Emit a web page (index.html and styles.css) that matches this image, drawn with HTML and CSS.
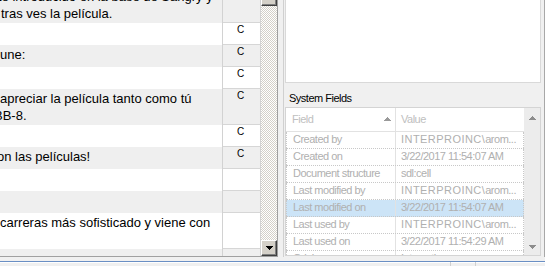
FILE: index.html
```html
<!DOCTYPE html>
<html lang="es">
<head>
  <meta charset="UTF-8" />
  <title>Editor</title>
  <link rel="stylesheet" href="styles.css">
</head>
<body>
  <div class="workspace">
    <!-- Segment grid (scrolled) -->
    <section class="segments">
      <div class="seg-rows">
        <div class="seg-row alt tall first">
          <div class="seg-text">
            <div class="ln shift-2">te introducido en la base de Sangry y</div>
            <div class="ln shift-p1">tras ves la película.</div>
          </div>
          <div class="seg-flag"></div>
        </div>
        <div class="seg-row">
          <div class="seg-text"></div>
          <div class="seg-flag">C</div>
        </div>
        <div class="seg-row alt">
          <div class="seg-text"><div class="ln">une:</div></div>
          <div class="seg-flag">C</div>
        </div>
        <div class="seg-row">
          <div class="seg-text"></div>
          <div class="seg-flag">C</div>
        </div>
        <div class="seg-row alt tall">
          <div class="seg-text">
            <div class="ln">apreciar la película tanto como tú</div>
            <div class="ln shift-6">BB-8.</div>
          </div>
          <div class="seg-flag">C</div>
        </div>
        <div class="seg-row">
          <div class="seg-text"></div>
          <div class="seg-flag">C</div>
        </div>
        <div class="seg-row alt">
          <div class="seg-text"><div class="ln shift-3">on las películas!</div></div>
          <div class="seg-flag">C</div>
        </div>
        <div class="seg-row">
          <div class="seg-text"></div>
          <div class="seg-flag"></div>
        </div>
        <div class="seg-row alt">
          <div class="seg-text"></div>
          <div class="seg-flag"></div>
        </div>
        <div class="seg-row tall">
          <div class="seg-text">
            <div class="ln">carreras más sofisticado y viene con</div>
            <div class="ln"></div>
          </div>
          <div class="seg-flag"></div>
        </div>
        <div class="seg-row alt">
          <div class="seg-text"></div>
          <div class="seg-flag"></div>
        </div>
      </div>
      <div class="vscroll">
        <div class="thumb"></div>
        <div class="scroll-btn">
          <svg width="7" height="4" viewBox="0 0 7 4" shape-rendering="crispEdges"><path d="M0 0h7v1H0zM1 1h5v1H1zM2 2h3v1H2zM3 3h1v1H3z" fill="#000"/></svg>
        </div>
      </div>
    </section>

    <!-- Properties side panel -->
    <aside class="props">
      <div class="notes"></div>
      <div class="props-label">System Fields</div>
      <div class="sf-grid">
        <div class="sf-table">
          <div class="sf-head">
            <div class="sf-hcell sf-field">
              <span>Field</span>
              <svg width="7" height="4" viewBox="0 0 7 4" shape-rendering="crispEdges"><path d="M3 0h1v1H3zM2 1h3v1H2zM1 2h5v1H1zM0 3h7v1H0z" fill="#9a9a9a"/></svg>
            </div>
            <div class="sf-hcell sf-value">Value</div>
          </div>
          <div class="sf-row">
            <div class="sf-cell">Created by</div>
            <div class="sf-cell sf-val"><span class="user">INTERPROINC\</span>arom...</div>
          </div>
          <div class="sf-row">
            <div class="sf-cell">Created on</div>
            <div class="sf-cell sf-val">3/22/2017 11:54:07 AM</div>
          </div>
          <div class="sf-row">
            <div class="sf-cell">Document structure</div>
            <div class="sf-cell sf-val">sdl:cell</div>
          </div>
          <div class="sf-row">
            <div class="sf-cell">Last modified by</div>
            <div class="sf-cell sf-val"><span class="user">INTERPROINC\</span>arom...</div>
          </div>
          <div class="sf-row selected">
            <div class="sf-cell">Last modified on</div>
            <div class="sf-cell sf-val">3/22/2017 11:54:07 AM</div>
          </div>
          <div class="sf-row">
            <div class="sf-cell">Last used by</div>
            <div class="sf-cell sf-val"><span class="user">INTERPROINC\</span>arom...</div>
          </div>
          <div class="sf-row">
            <div class="sf-cell">Last used on</div>
            <div class="sf-cell sf-val">3/22/2017 11:54:29 AM</div>
          </div>
          <div class="sf-row">
            <div class="sf-cell">Origin</div>
            <div class="sf-cell sf-val">Interactive</div>
          </div>
        </div>
        <div class="sf-scroll">
          <svg width="7" height="4" viewBox="0 0 7 4" shape-rendering="crispEdges"><path d="M3 0h1v1H3zM2 1h3v1H2zM1 2h5v1H1zM0 3h7v1H0z" fill="#8c8c8c"/></svg>
          <svg width="7" height="4" viewBox="0 0 7 4" shape-rendering="crispEdges"><path d="M0 0h7v1H0zM1 1h5v1H1zM2 2h3v1H2zM3 3h1v1H3z" fill="#8c8c8c"/></svg>
        </div>
      </div>
    </aside>
  </div>

  <div class="status">
    <div class="status-cell main"></div>
    <div class="status-cell small"></div>
  </div>
</body>
</html>
```

FILE: styles.css
```css
body {
  margin: 0;
  width: 545px;
  height: 266px;
  overflow: hidden;
  background: #f0f0f0;
  font-family: "Liberation Sans", Arial, sans-serif;
}
.workspace {
  display: flex;
  align-items: flex-start;
  height: 261px;
}

/* Segment grid */
.segments {
  display: flex;
  width: 278px;
  height: 257px;
  box-sizing: border-box;
  border-right: 1px solid #a0a0a0;
  border-bottom: 1px solid #a0a0a0;
  background: #fff;
}
.seg-rows {
  width: 261px;
  overflow: hidden;
}
.seg-row {
  display: grid;
  grid-template-columns: 223px 38px;
  height: 22px;
  background: #fff;
}
.seg-row.alt {
  background: #efefef;
}
.seg-row.tall {
  height: 36px;
}
.seg-row.first {
  margin-top: -13px;
}
.seg-text {
  box-sizing: border-box;
  border-right: 1px solid #d2d2d2;
  padding-top: 1px;
  overflow: hidden;
  white-space: nowrap;
  font-size: 13px;
  line-height: 17px;
  color: #000;
}
.ln {
  height: 17px;
}
.shift-2 { margin-left: -2px; }
.shift-3 { margin-left: -3px; }
.shift-6 { margin-left: -6px; }
.shift-p1 { margin-left: 1px; }
.seg-flag {
  box-sizing: border-box;
  border-right: 1px solid #d2d2d2;
  border-bottom: 1px solid #d6d6d6;
  padding: 1px 0 0 14px;
  font-size: 10px;
  line-height: 12px;
  color: #000;
}

.vscroll {
  width: 16px;
  display: flex;
  flex-direction: column;
  justify-content: space-between;
  background: repeating-conic-gradient(#d4d0c8 0 25%, #fff 0 50%) 0 0 / 2px 2px;
}
.thumb {
  height: 6px;
  box-sizing: border-box;
  background: #d4d0c8;
  border-left: 1px solid #fff;
  border-right: 1px solid #404040;
  border-bottom: 1px solid #404040;
  box-shadow: inset -1px -1px #808080;
}
.scroll-btn {
  height: 16px;
  box-sizing: border-box;
  background: #d4d0c8;
  border: 1px solid;
  border-color: #fff #404040 #404040 #fff;
  box-shadow: inset -1px -1px #808080;
  display: flex;
  align-items: center;
  justify-content: center;
  padding-bottom: 1px;
}

/* Properties panel */
.props {
  margin-left: 5px;
  width: 262px;
  height: 257px;
  box-sizing: border-box;
  border-left: 1px solid #d0d0d0;
  border-right: 1px solid #a8a8a8;
  padding: 0 3px 0 1px;
  display: flex;
  flex-direction: column;
  font-size: 11px;
  line-height: 13px;
  letter-spacing: -0.5px;
}
.notes {
  height: 83px;
  box-sizing: border-box;
  border: 1px solid #d9d9d9;
  border-top: none;
  background: #fff;
}
.props-label {
  height: 24px;
  box-sizing: border-box;
  padding: 9px 0 0 4px;
  color: #000;
}
.sf-grid {
  display: flex;
  height: 149px;
  box-sizing: border-box;
  border: 1px solid #d4d4d4;
  background: #fff;
}
.sf-table {
  width: 238px;
  overflow: hidden;
}
.sf-head,
.sf-row {
  display: grid;
  grid-template-columns: 110px 128px;
}
.sf-head {
  height: 24px;
  box-sizing: border-box;
  border-bottom: 1px solid #e2e2e2;
  color: #c0c0c0;
}
.sf-hcell {
  box-sizing: border-box;
  padding-top: 5px;
}
.sf-field {
  display: flex;
  justify-content: space-between;
  padding-left: 6px;
  padding-right: 4px;
  border-right: 1px solid #e2e2e2;
}
.sf-field svg {
  margin-top: 4px;
}
.sf-value {
  padding-left: 5px;
}
.sf-row {
  height: 17px;
  box-sizing: border-box;
  border-bottom: 1px dotted #c8c8c8;
  color: #b0b0b0;
}
.sf-row.selected {
  background: #cce4f7;
}
.sf-cell {
  box-sizing: border-box;
  padding: 1px 0 0 6px;
  white-space: nowrap;
  overflow: hidden;
}
.sf-cell:first-child {
  border-left: 1px dotted #c8c8c8;
  padding-left: 6px;
  border-right: 1px solid #e2e2e2;
}
.sf-val {
  padding-left: 5px;
  border-right: 1px dotted #c8c8c8;
}
.user {
  letter-spacing: 0.45px;
}
.sf-scroll {
  width: 16px;
  background: #ececec;
  display: flex;
  flex-direction: column;
  justify-content: space-between;
  align-items: center;
  padding: 8px 0 6px 1px;
  box-sizing: border-box;
}

/* Status strip */
.status {
  display: flex;
  height: 5px;
  border-top: 1px solid #6a8fc4;
  box-shadow: inset 0 1px #fff;
}
.status-cell {
  box-sizing: border-box;
  border-right: 1px solid #d0d0d0;
}
.status-cell.main {
  width: 451px;
}
.status-cell.small {
  width: 25px;
}
```
